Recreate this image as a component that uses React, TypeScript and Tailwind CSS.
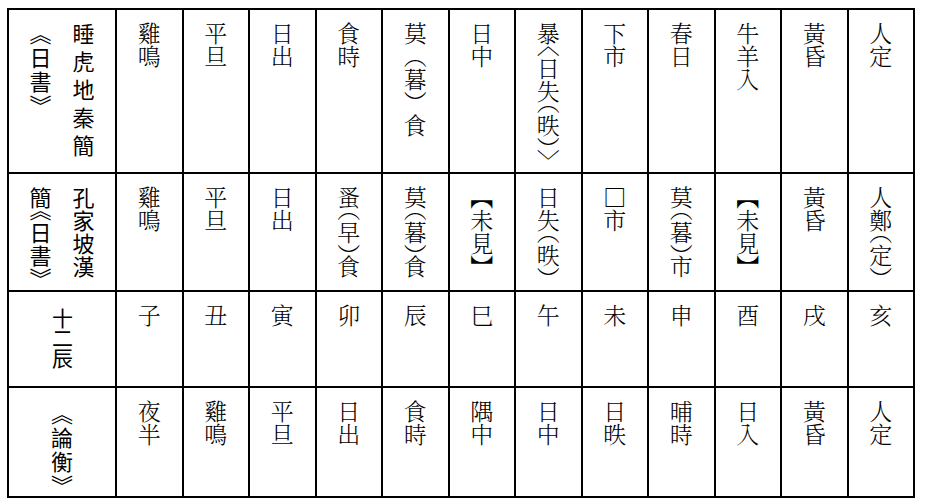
import React from "react";

type Cell = { t: string; half?: boolean };

const rows: Cell[][] = [
  [
    { t: "雞鳴" },
    { t: "平旦" },
    { t: "日出" },
    { t: "食時" },
    { t: "莫（暮）食" },
    { t: "日中" },
    { t: "暴〈日失（昳）〉", half: true },
    { t: "下市" },
    { t: "春日" },
    { t: "牛羊入" },
    { t: "黃昏" },
    { t: "人定" },
  ],
  [
    { t: "雞鳴" },
    { t: "平旦" },
    { t: "日出" },
    { t: "蚤（早）食", half: true },
    { t: "莫（暮）食", half: true },
    { t: "【未見】" },
    { t: "日失（昳）", half: true },
    { t: "□市" },
    { t: "莫（暮）市", half: true },
    { t: "【未見】" },
    { t: "黃昏" },
    { t: "人鄭（定）", half: true },
  ],
  "子丑寅卯辰巳午未申酉戌亥".split("").map((t) => ({ t })),
  [
    { t: "夜半" },
    { t: "雞鳴" },
    { t: "平旦" },
    { t: "日出" },
    { t: "食時" },
    { t: "隅中" },
    { t: "日中" },
    { t: "日昳" },
    { t: "晡時" },
    { t: "日入" },
    { t: "黃昏" },
    { t: "人定" },
  ],
];

function DataCell({ cell }: { cell: Cell }) {
  return (
    <div className="bg-white flex justify-center pt-[12px]">
      <span
        className={
          cell.half
            ? "[writing-mode:vertical-rl] leading-none text-[23px] font-light text-black font-['Noto_Serif_CJK_TC','Noto_Sans_CJK_TC',serif] [font-feature-settings:'vhal']"
            : "[writing-mode:vertical-rl] leading-none text-[23px] font-light text-black font-['Noto_Serif_CJK_TC','Noto_Sans_CJK_TC',serif]"
        }
      >
        {cell.t}
      </span>
    </div>
  );
}

export default function App() {
  return (
    <div className="w-[925px] h-[503px] bg-white font-['Noto_Sans_CJK_TC',sans-serif] overflow-hidden">
      <div className="ml-[7px] mt-[8px] w-[908px] h-[490px] bg-black p-[2px] grid grid-cols-[106px_repeat(12,minmax(0,1fr))] grid-rows-[162px_116px_94px_108px] gap-[2px]">
        {/* row 1 */}
        <div className="bg-white flex justify-center items-start gap-[21px] pt-[13px] text-black">
          <span className="[writing-mode:vertical-rl] leading-none text-[22px] font-normal tracking-[2px]">
            《日書》
          </span>
          <span className="[writing-mode:vertical-rl] leading-none text-[22px] font-normal tracking-[6px]">
            睡虎地秦簡
          </span>
        </div>
        {rows[0].map((c, i) => (
          <DataCell key={"a" + i} cell={c} />
        ))}

        {/* row 2 */}
        <div className="bg-white flex justify-center items-start gap-[21px] pt-[13px] text-black">
          <span className="[writing-mode:vertical-rl] leading-none text-[22px] font-normal [font-feature-settings:'vhal'] tracking-[1px]">
            簡《日書》
          </span>
          <span className="[writing-mode:vertical-rl] leading-none text-[22px] font-normal tracking-[1px]">
            孔家坡漢
          </span>
        </div>
        {rows[1].map((c, i) => (
          <DataCell key={"b" + i} cell={c} />
        ))}

        {/* row 3 */}
        <div className="bg-white flex justify-center pt-[16px] text-black">
          <span className="[writing-mode:vertical-rl] leading-none text-[21px] font-normal tracking-[-1px]">
            十二辰
          </span>
        </div>
        {rows[2].map((c, i) => (
          <DataCell key={"c" + i} cell={c} />
        ))}

        {/* row 4 */}
        <div className="bg-white flex justify-center pt-[15px] text-black">
          <span className="[writing-mode:vertical-rl] leading-none text-[22px] font-normal tracking-[2px]">
            《論衡》
          </span>
        </div>
        {rows[3].map((c, i) => (
          <DataCell key={"d" + i} cell={c} />
        ))}
      </div>
    </div>
  );
}
